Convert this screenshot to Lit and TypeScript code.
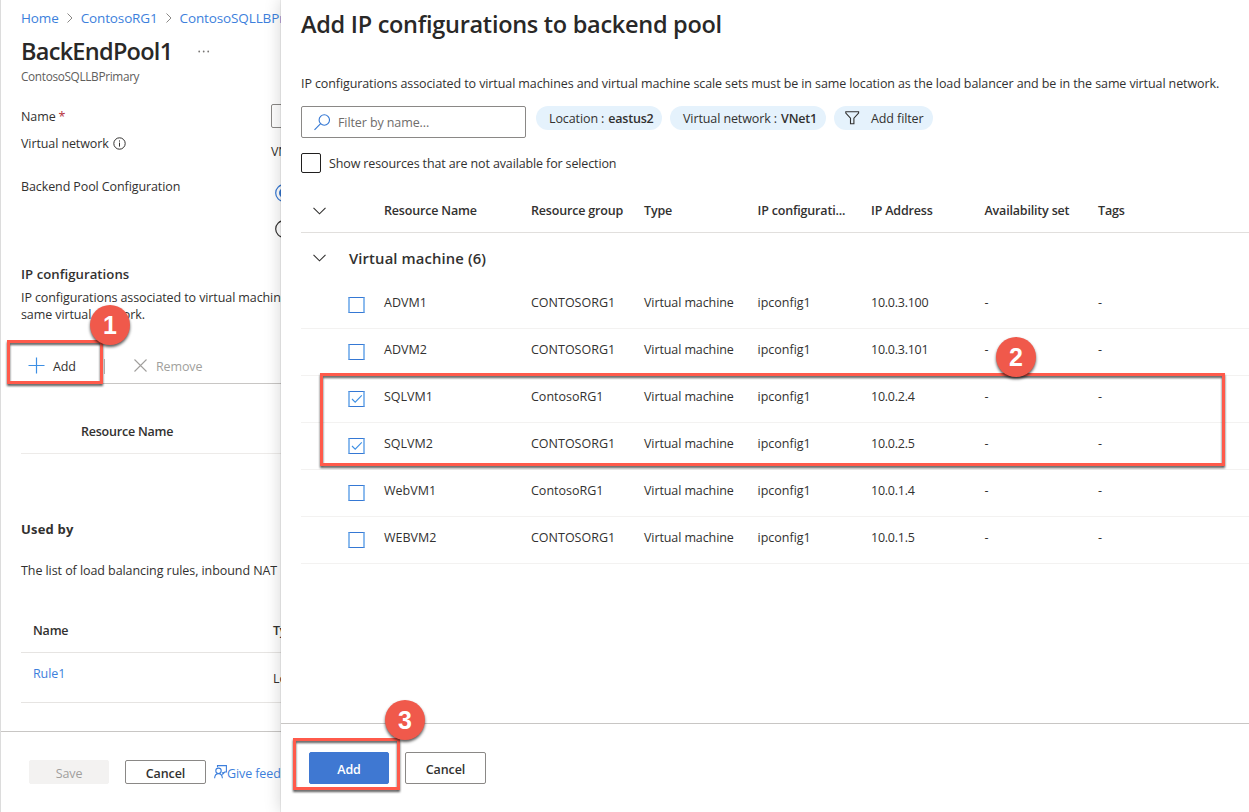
import { LitElement, html, css, svg } from "lit";
import { customElement, property } from "lit/decorators.js";

const base = css`
  * { box-sizing: border-box; }
  :host {
    font-family: "Open Sans", "Noto Sans", sans-serif;
    font-size: 12.5px;
    letter-spacing: -0.1px;
    color: #323130;
    white-space: nowrap;
  }
  .row { display: flex; align-items: center; }
  svg { display: block; fill: none; flex: none; }
  .strong { font-weight: 600; letter-spacing: -0.22px; }
  .btn {
    display: flex; align-items: center; justify-content: center; flex: none;
    border: 1px solid #8a8886; border-radius: 2px;
    font-weight: 600; color: #323130; background: #fff;
  }
`;

const chevron = svg`<path d="M0.5 0.8 L6.5 6.8 L12.5 0.8" stroke="#323130" stroke-width="1.1"/>`;

@customElement("pool-page")
class PoolPage extends LitElement {
  static styles = [base, css`
    :host { display: flex; flex-direction: column; height: 812px; overflow: hidden; border-left: 1px solid #dcdcdc; }
    .body { height: 731px; padding-left: 20px; display: flex; flex-direction: column; }
    .crumbs { height: 36px; gap: 8px; font-size: 13.5px; letter-spacing: -0.13px; color: #3d7fdc; }
    .title { height: 30px; font-size: 23.5px; font-weight: 600; letter-spacing: -0.72px; color: #292827; }
    .name { width: 150px; }
    .dots { margin-left: 27px; }
    .sub { height: 20px; font-size: 11.8px; letter-spacing: -0.33px; color: #605e5c; padding-bottom: 1px; }
    .form { display: grid; grid-template-columns: 250px 1fr; grid-template-rows: 24px 42px 92px; margin-top: 18px; height: 158px; }
    .label { display: flex; align-items: center; gap: 4px; height: 24px; }
    .req { color: #b5303a; margin-left: -1px; }
    .vnet { height: 30px; }
    .input { border: 1px solid #8a8886; border-radius: 2px; width: 200px; height: 24px; }
    .value { padding-top: 15px; }
    .pool { height: 32px; }
    .radios { display: flex; flex-direction: column; gap: 18px; padding: 14px 0 0 4px; }
    .h { height: 24px; font-size: 13.2px; font-weight: 600; letter-spacing: 0.03px; }
    .para { line-height: 17px; padding-top: 3px; height: 63px; }
    .tools { height: 35px; border-bottom: 1px solid #c8c6c4; padding-left: 7px; }
    .plus { margin-right: 8px; }
    .icon { margin-bottom: 2px; }
    .sep { width: 1px; height: 15px; background: #b8b6b4; margin: 0 29px 0 28px; }
    .x { margin-right: 9px; }
    .muted { color: #a19f9d; }
    .col { height: 70px; padding: 25px 0 0 60px; border-bottom: 1px solid #edebe9; align-items: flex-start; line-height: 46px; }
    .used { margin-top: 63px; font-weight: 700; font-size: 13px; letter-spacing: 0.2px; }
    .desc { height: 58px; letter-spacing: -0.07px; }
    .list { display: grid; grid-template-columns: 240px 1fr; padding-left: 12px; border-bottom: 1px solid #e6e4e2; align-items: center; }
    .lh { height: 54px; padding-top: 9px; font-weight: 600; letter-spacing: -0.2px; }
    .lr { height: 50px; }
    .rule { color: #3d7fdc; padding-bottom: 9px; }
    .load { padding-top: 2px; }
    .foot { height: 81px; border-top: 1px solid #c8c6c4; padding: 28px 0 0 28px; align-items: flex-start; }
    .foot .btn { padding-top: 2px; }
    .foot .save { width: 80px; height: 24px; background: #f3f2f1; border-color: #f3f2f1; color: #a19f9d; font-weight: 400; margin-right: 16px; }
    .cancel { width: 81px; height: 24px; margin-right: 8px; }
    .fb { color: #3d7fdc; height: 24px; padding-top: 2px; }
    .fbi { margin-bottom: 3px; }
  `];
  render() {
    const sep = html`<svg width="6" height="10"><path d="M0.5 0.5 L5 5 L0.5 9.5" stroke="#8a8886"/></svg>`;
    return html`
      <div class="body">
        <div class="row crumbs"><span>Home</span>${sep}<span>ContosoRG1</span>${sep}<span>ContosoSQLLBPrimary</span></div>
        <div class="row title"><span class="name">BackEndPool1</span>
          <svg class="dots" width="12" height="3"><g fill="#797775"><circle cx="1.2" cy="1.5" r=".9"/><circle cx="5.7" cy="1.5" r=".9"/><circle cx="10.2" cy="1.5" r=".9"/></g></svg>
        </div>
        <div class="row sub">ContosoSQLLBPrimary</div>
        <div class="form">
          <div class="label"><span>Name</span><span class="req">*</span></div><div class="input"></div>
          <div class="label vnet"><span>Virtual network</span>
            <svg width="13" height="13"><circle cx="6.5" cy="6.5" r="5.7" stroke="#323130"/><path d="M6.5 5.6V9.6M6.5 3.4V4.6" stroke="#323130"/></svg>
          </div><div class="value">VNet1</div>
          <div class="label pool">Backend Pool Configuration</div>
          <div class="radios">
            <svg width="18" height="18"><circle cx="9" cy="9" r="8.3" stroke="#3578d4" stroke-width="1.2"/><circle cx="9" cy="9" r="5" fill="#3578d4"/></svg>
            <svg width="18" height="18"><circle cx="9" cy="9" r="8.3" stroke="#323130" stroke-width="1.2"/></svg>
          </div>
        </div>
        <div class="row h">IP configurations</div>
        <div class="para">IP configurations associated to virtual machines<br>same virtual network.</div>
        <div class="row tools">
          <svg class="plus icon" width="17" height="17"><path d="M8.5 0.5V16.5M0.5 8.5H16.5" stroke="#3d8fe4" stroke-width="1.2"/></svg><span>Add</span>
          <div class="sep"></div>
          <svg class="x icon" width="13" height="13"><path d="M0.5 0.5L12.5 12.5M12.5 0.5L0.5 12.5" stroke="#a19f9d" stroke-width="1.1"/></svg><span class="muted">Remove</span>
        </div>
        <div class="row col strong">Resource Name</div>
        <div class="row h used">Used by</div>
        <div class="row desc">The list of load balancing rules, inbound NAT</div>
        <div class="list lh"><span>Name</span><span>Type</span></div>
        <div class="list lr"><span class="rule">Rule1</span><span class="load">Load</span></div>
      </div>
      <div class="row foot">
        <div class="btn save">Save</div><div class="btn cancel">Cancel</div>
        <div class="row fb">
          <svg class="fbi" width="13" height="14" stroke="#3d7fdc" stroke-width="1.1"><circle cx="4.5" cy="5.8" r="2.7"/><path d="M.6 13.3C.8 10.5 2.4 8.6 4.5 8.6S8.2 10.5 8.4 13.3M3.5 2.3V.6H12.4V7H10.7L8.8 9V7"/></svg><span>Give feedback</span>
        </div>
      </div>`;
  }
}

const columns = ["Resource Name", "Resource group", "Type", "IP configurati...", "IP Address", "Availability set", "Tags"];
const machines: { name: string; group: string; ip: string; on?: boolean }[] = [
  { name: "ADVM1", group: "CONTOSORG1", ip: "10.0.3.100" },
  { name: "ADVM2", group: "CONTOSORG1", ip: "10.0.3.101" },
  { name: "SQLVM1", group: "ContosoRG1", ip: "10.0.2.4", on: true },
  { name: "SQLVM2", group: "CONTOSORG1", ip: "10.0.2.5", on: true },
  { name: "WebVM1", group: "ContosoRG1", ip: "10.0.1.4" },
  { name: "WEBVM2", group: "CONTOSORG1", ip: "10.0.1.5" },
];

@customElement("config-panel")
class ConfigPanel extends LitElement {
  static styles = [base, css`
    :host { display: flex; flex-direction: column; height: 812px; background: #fff; box-shadow: 0 0 1px rgba(0,0,0,.35), 0 0 16px rgba(0,0,0,.18); }
    .body { height: 723px; padding-left: 20px; }
    .title { height: 48px; padding-bottom: 1px; font-size: 23.5px; font-weight: 600; letter-spacing: -0.28px; color: #292827; }
    .desc { height: 58px; padding-top: 13px; }
    .filters { display: flex; gap: 8px; height: 32px; }
    .search { width: 225px; height: 32px; border: 1px solid #8a8886; border-radius: 2px; padding: 1px 0 0 12px; gap: 8px; color: #6f6d6b; margin-right: 2px; }
    .pill { height: 24px; border-radius: 12px; background: #e5f2fc; gap: 4px; }
    .pill .strong { letter-spacing: -0.2px; }
    .loc { width: 126px; padding-left: 13px; }
    .net { width: 156px; padding-left: 13px; }
    .add { width: 99px; padding-left: 11px; gap: 11px; }
    .show { height: 20px; margin-top: 15px; gap: 8px; letter-spacing: -0.13px; }
    .box { width: 20px; height: 20px; border: 1px solid #201f1e; border-radius: 2px; }
    .grid { display: grid; grid-template-columns: 47px 36px 147px 113px 113.5px 113.5px 113.5px 113.5px 1fr; align-items: center; }
    .head { height: 60px; padding-top: 16px; border-bottom: 1px solid #e1dfdd; font-weight: 600; letter-spacing: -0.18px; }
    .chev { margin-left: 12px; }
    .group { height: 49px; font-weight: 600; font-size: 14.8px; letter-spacing: 0.13px; }
    .group > span { grid-column: 2 / 6; padding-left: 1px; }
    .item { height: 47px; padding-bottom: 5px; border-bottom: 1px solid #f3f2f1; }
    .cell { letter-spacing: 0; }
    .ip { letter-spacing: -0.25px; }
    .check { width: 17px; height: 16px; border: solid #3578d4; border-color: #3578d4 #8cbbee; border-width: 1px 2px; margin-top: 4px; }
    .tick { margin: 2.5px 0 0 .5px; }
    .foot { height: 89px; border-top: 1px solid #c8c6c4; padding: 28px 0 0 28px; gap: 16px; align-items: flex-start; }
    .foot .btn { width: 81px; height: 32px; padding-top: 2px; }
    .foot .primary { width: 80px; background: #3f78d2; border-color: #3f78d2; color: #fff; }
  `];
  render() {
    return html`
      <div class="body">
        <div class="row title">Add IP configurations to backend pool</div>
        <div class="row desc"><span>IP configurations associated to virtual machines and virtual machine scale sets must be in same location as the load balancer and be in the same virtual network.</span></div>
        <div class="filters">
          <div class="row search">
            <svg width="16" height="17" stroke="#3578d4" stroke-width="1.1"><circle cx="10.3" cy="6" r="5.2"/><path d="M6.6 9.7L.5 15.9"/></svg>
            <span>Filter by name...</span>
          </div>
          <div class="row pill loc"><span>Location :</span><span class="strong">eastus2</span></div>
          <div class="row pill net"><span>Virtual network :</span><span class="strong">VNet1</span></div>
          <div class="row pill add">
            <svg width="15" height="14"><path d="M.8 .7H13.6V2L8.9 7.2V12.8H5.5V7.2L.8 2Z" stroke="#323130" stroke-width="1.1"/></svg><span>Add filter</span>
          </div>
        </div>
        <div class="row show"><div class="box"></div><span>Show resources that are not available for selection</span></div>
        <div class="grid head"><svg class="chev" width="13" height="8">${chevron}</svg><span></span>${columns.map((c) => html`<span>${c}</span>`)}</div>
        <div class="grid group"><svg class="chev" width="13" height="8">${chevron}</svg><span>Virtual machine (6)</span></div>
        ${machines.map((m) => html`
          <div class="grid item"><span></span>
            <div class="check">${m.on ? html`<svg class="tick" width="12" height="10"><path d="M1 5L4.2 8.2L10.8 1.4" stroke="#3d8fe4" stroke-width="1.1"/></svg>` : ""}</div>
            <span class="cell">${m.name}</span><span class="cell">${m.group}</span><span>Virtual machine</span><span class="cell">ipconfig1</span><span class="ip">${m.ip}</span><span>-</span><span>-</span>
          </div>`)}
      </div>
      <div class="row foot"><div class="btn primary">Add</div><div class="btn">Cancel</div></div>`;
  }
}

@customElement("step-badge")
class StepBadge extends LitElement {
  @property() label = "";
  static styles = css`
    :host {
      display: flex; align-items: center; justify-content: center;
      width: 40px; height: 40px; border-radius: 50%;
      background: #f0594b; color: #fff; box-shadow: 0 2px 3px rgba(0,0,0,.65);
      font: bold 25px "Liberation Sans", sans-serif;
    }
  `;
  render() { return html`${this.label}`; }
}

@customElement("app-root")
class AppRoot extends LitElement {
  static styles = css`
    :host { display: block; position: relative; width: 1249px; height: 812px; overflow: hidden; background: #fff; }
    .layout { display: grid; grid-template-columns: 281px 968px; }
    pool-page { min-width: 0; }
    config-panel { position: relative; }
    .mark, step-badge { position: absolute; }
    .mark { box-sizing: border-box; border: 3.5px solid #ff5a4b; filter: drop-shadow(0.5px 2px 1px rgba(0,0,0,.65)); }
    .m1 { left: 7px; top: 340px; width: 96px; height: 44px; }
    .m2 { left: 320px; top: 373px; width: 905px; height: 93px; }
    .m3 { left: 293px; top: 738px; width: 107px; height: 52px; }
    .b1 { left: 90px; top: 305px; }
    .b2 { left: 996px; top: 337px; }
    .b3 { left: 385px; top: 700px; }
  `;
  render() {
    return html`
      <div class="layout"><pool-page></pool-page><config-panel></config-panel></div>
      <div class="mark m1"></div><div class="mark m2"></div><div class="mark m3"></div>
      <step-badge class="b1" label="1"></step-badge>
      <step-badge class="b2" label="2"></step-badge>
      <step-badge class="b3" label="3"></step-badge>`;
  }
}
